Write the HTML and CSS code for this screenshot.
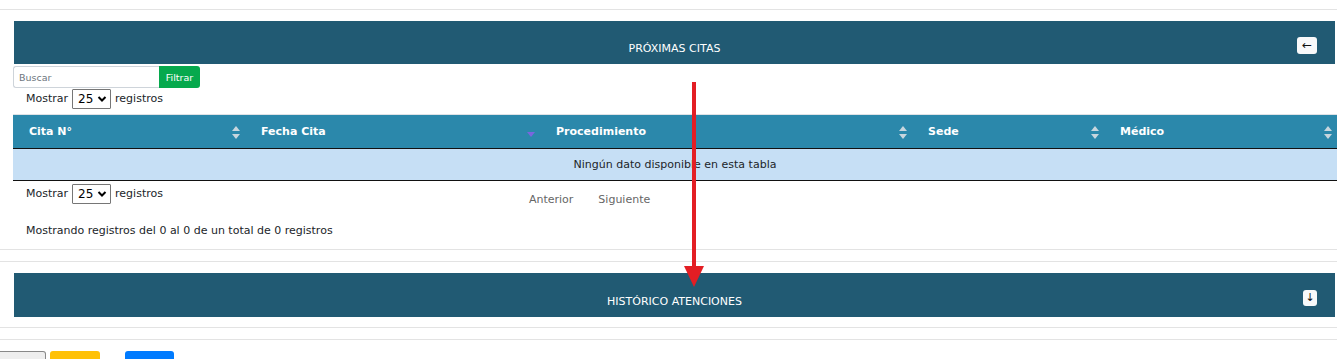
FILE: index.html
```html
<!DOCTYPE html>
<html lang="es">
<head>
<meta charset="utf-8">
<title>Próximas citas</title>
<link rel="stylesheet" href="styles.css">
</head>
<body>
<div class="page">
  <div class="rule top"></div>
  <section class="panel">
    <div class="bar bar-first">
      <span class="bar-title">PRÓXIMAS CITAS</span>
      <button class="bar-btn">&larr;</button>
    </div>
    <div class="search">
      <input class="search-input" type="text" placeholder="Buscar">
      <button class="search-btn">Filtrar</button>
    </div>
    <div class="length">
      Mostrar
      <span class="select">25 <svg width="10" height="8" viewBox="0 0 10 8"><path d="M1.5 2 L5 5.5 L8.5 2" fill="none" stroke="#000" stroke-width="2"/></svg></span>
      registros
    </div>
    <table class="grid">
      <colgroup>
        <col class="c1"><col class="c2"><col class="c3"><col class="c4"><col class="c5">
      </colgroup>
      <thead>
        <tr>
          <th><span>Cita N°</span><i class="sort"></i></th>
          <th><span>Fecha Cita</span><i class="sort desc"></i></th>
          <th><span>Procedimiento</span><i class="sort"></i></th>
          <th><span>Sede</span><i class="sort"></i></th>
          <th><span>Médico</span><i class="sort"></i></th>
        </tr>
      </thead>
      <tbody>
        <tr><td colspan="5">Ningún dato disponible en esta tabla</td></tr>
      </tbody>
    </table>
    <div class="foot">
      <div class="length">
        Mostrar
        <span class="select">25 <svg width="10" height="8" viewBox="0 0 10 8"><path d="M1.5 2 L5 5.5 L8.5 2" fill="none" stroke="#000" stroke-width="2"/></svg></span>
        registros
      </div>
      <div class="pager"><span>Anterior</span><span>Siguiente</span></div>
    </div>
    <div class="info">Mostrando registros del 0 al 0 de un total de 0 registros</div>
  </section>
  <div class="rule r1"></div>
  <div class="rule r2"></div>
  <section class="panel">
    <div class="bar bar-second">
      <span class="bar-title">HISTÓRICO ATENCIONES</span>
      <button class="bar-btn small">&darr;</button>
    </div>
  </section>
  <div class="rule r3"></div>
  <div class="rule r4"></div>
  <div class="actions">
    <span class="act gray"></span>
    <span class="act yellow"></span>
    <span class="act blue"></span>
  </div>
  <svg class="annot" width="30" height="210" viewBox="0 0 30 210">
    <rect x="10" y="0" width="4" height="190" fill="#e31e24"/>
    <polygon points="2,184 22,184 12,205" fill="#e31e24"/>
  </svg>
</div>
</body>
</html>
```
FILE: styles.css
```css
* { box-sizing: border-box; }
body {
  margin: 0;
  font-family: "DejaVu Sans", Verdana, sans-serif;
  font-size: 11px;
  color: #212529;
  background: #fff;
  overflow: hidden;
}
.page { position: relative; width: 1337px; height: 359px; overflow: hidden; }
.rule { height: 1px; background: #e3e3e3; }
.rule.top { margin-top: 9px; }
.rule.r1 { margin-top: 7px; }
.rule.r2 { margin-top: 11px; }
.rule.r3 { margin-top: 10px; }
.rule.r4 { margin-top: 11px; }
.panel { padding-left: 13px; }
.bar {
  background: #215a73;
  margin: 0 2px 0 1px;
  height: 43px;
  color: #fff;
  display: flex;
  align-items: flex-end;
  justify-content: center;
  position: relative;
  padding-bottom: 9px;
}
.bar-first { margin-top: 11px; }
.bar-second { margin-top: 11px; height: 44px; padding-bottom: 9px; }
.bar-title { font-size: 11px; letter-spacing: 0; }
.bar-btn {
  position: absolute;
  right: 18px;
  top: 16px;
  width: 20px;
  height: 17px;
  border: 0;
  border-radius: 3px;
  background: #f8f9fa;
  color: #111;
  font-size: 12px;
  line-height: 17px;
  padding: 0;
  font-family: "DejaVu Sans", sans-serif;
}
.bar-btn.small { width: 14px; height: 16px; right: 18px; top: 17px; font-size: 11px; line-height: 16px; }
.search { display: flex; margin-top: 2px; height: 22px; }
.search-input {
  width: 146px;
  height: 22px;
  border: 1px solid #ced4da;
  border-right: 0;
  border-radius: 3px 0 0 3px;
  padding: 0 5px;
  font-family: inherit;
  font-size: 9.5px;
  color: #495057;
}
.search-input::placeholder { color: #6c757d; }
.search-btn {
  width: 41px;
  height: 22px;
  border: 0;
  border-radius: 0 3px 3px 0;
  background: #06a94d;
  color: #fff;
  font-family: inherit;
  font-size: 9.5px;
  padding: 0;
}
.length {
  display: flex;
  align-items: center;
  height: 21px;
  padding-left: 13px;
  gap: 4px;
  font-size: 11px;
}
.select {
  display: inline-flex;
  align-items: center;
  gap: 4px;
  width: 39px;
  height: 20px;
  border: 1px solid #767676;
  padding-left: 5px;
  font-size: 12px;
  color: #000;
  border-radius: 1px;
}
.grid {
  margin-top: 5px;
  width: 1324px;
  table-layout: fixed;
  border-collapse: collapse;
  border-top: 1px solid #dee2e6;
}
.c1 { width: 232px; } .c2 { width: 295px; } .c3 { width: 372px; } .c4 { width: 192px; } .c5 { width: 233px; }
.grid th {
  background: #2b88ab;
  color: #fff;
  font-weight: bold;
  font-size: 11px;
  text-align: left;
  height: 34px;
  padding: 0 0 0 16px;
  position: relative;
  border-bottom: 1px solid #111;
}
.sort {
  position: absolute;
  right: 5px;
  top: 11px;
  width: 8px;
  height: 13px;
}
.sort::before, .sort::after {
  content: "";
  position: absolute;
  left: 0;
  border-left: 4px solid transparent;
  border-right: 4px solid transparent;
}
.sort::before { top: 0; border-bottom: 5px solid #c7d6de; }
.sort::after { bottom: 0; border-top: 5px solid #c7d6de; }
.sort.desc { top: 17px; height: 5px; }
.sort.desc::before { display: none; }
.sort.desc::after { border-top-color: #7a66de; }
.grid td {
  background: #c6dff5;
  height: 32px;
  text-align: center;
  border-bottom: 1px solid #111;
  font-size: 11px;
}
.foot { display: flex; align-items: flex-start; margin-top: 2px; }
.pager { display: flex; gap: 25px; margin-left: 366px; margin-top: 10px; color: #666; }
.info { padding-left: 13px; margin-top: 18px; height: 18px; }
.actions { display: flex; margin-top: 11px; height: 10px; }
.act { display: block; height: 12px; border-radius: 3px 3px 0 0; }
.act.gray { width: 46px; background: #eee; border: 1px solid #888; border-left: 0; border-radius: 0 3px 0 0; }
.act.yellow { width: 50px; margin-left: 4px; background: #ffc107; }
.act.blue { width: 49px; margin-left: 25px; background: #007bff; }
.annot { position: absolute; left: 682px; top: 82px; }
```
